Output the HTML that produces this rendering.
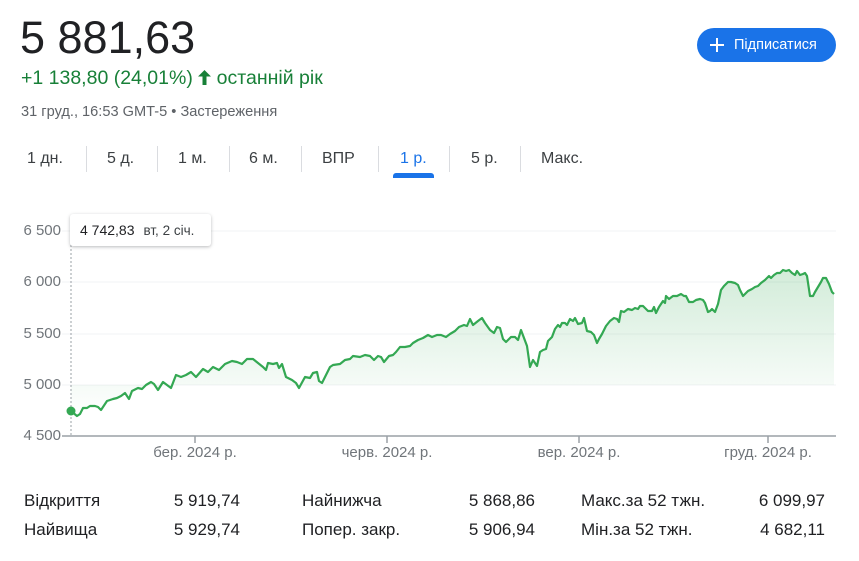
<!DOCTYPE html>
<html><head><meta charset="utf-8"><style>
body{margin:0;width:859px;height:561px;background:#fff;font-family:"Liberation Sans",Arial,sans-serif;position:relative;overflow:hidden;color:#202124}
.a{position:absolute;white-space:nowrap}
.tab{position:absolute;top:150px;font-size:16px;color:#3c4043}
.sep{position:absolute;top:146px;width:1px;height:26px;background:#dadce0}
.yl{position:absolute;right:798px;font-size:15px;color:#70757a}
.xl{position:absolute;top:444px;font-size:15px;color:#70757a;transform:translateX(-50%)}
.st{position:absolute;font-size:17px;color:#202124}
.v{text-align:right}
</style></head><body>
<div class="a" style="left:20px;top:12px;font-size:45px;line-height:52px;color:#202124">5 881,63</div>
<div class="a" style="left:21px;top:67px;font-size:19.5px;color:#188038">+1 138,80 (24,01%) <svg width="13" height="15" viewBox="0 0 13 15" style="vertical-align:-1px"><path d="M6.5 0L0 6.5h4.5V15h4V6.5H13z" fill="#188038"/></svg> останній рік</div>
<div class="a" style="left:21px;top:104px;font-size:14.6px;color:#5f6368">31 груд., 16:53 GMT-5 • Застереження</div>
<div class="a" style="left:697px;top:28px;width:139px;height:34px;border-radius:17px;background:#1a73e8;color:#fff;font-size:14.5px;line-height:34px;">
<svg width="14" height="14" viewBox="0 0 14 14" style="position:absolute;left:13px;top:10px"><path d="M7 0v14M0 7h14" stroke="#fff" stroke-width="2"/></svg>
<span style="position:absolute;left:37px">Підписатися</span></div>
<div class="tab" style="left:27px">1 дн.</div>
<div class="sep" style="left:86px"></div>
<div class="tab" style="left:107px">5 д.</div>
<div class="sep" style="left:157px"></div>
<div class="tab" style="left:178px">1 м.</div>
<div class="sep" style="left:229px"></div>
<div class="tab" style="left:249px">6 м.</div>
<div class="sep" style="left:301px"></div>
<div class="tab" style="left:322px">ВПР</div>
<div class="sep" style="left:378px"></div>
<div class="tab" style="left:400px;color:#1a73e8">1 р.</div>
<div class="a" style="left:393px;top:173px;width:41px;height:5px;background:#1a73e8;border-radius:3px 3px 0 0"></div>
<div class="sep" style="left:449px"></div>
<div class="tab" style="left:471px">5 р.</div>
<div class="sep" style="left:520px"></div>
<div class="tab" style="left:541px">Макс.</div>

<div class="yl" style="top:222px">6 500</div>
<div class="yl" style="top:273px">6 000</div>
<div class="yl" style="top:325px">5 500</div>
<div class="yl" style="top:376px">5 000</div>
<div class="yl" style="top:427px">4 500</div>

<svg class="a" style="left:0;top:0" width="859" height="470">
<defs><linearGradient id="g" x1="0" y1="0" x2="0" y2="1"><stop offset="0" stop-color="#34a853" stop-opacity=".22"/><stop offset="1" stop-color="#34a853" stop-opacity="0"/></linearGradient></defs>
<g stroke="#f1f3f4" stroke-width="1"><line x1="62" y1="231" x2="836" y2="231"/><line x1="62" y1="282" x2="836" y2="282"/><line x1="62" y1="334" x2="836" y2="334"/><line x1="62" y1="385" x2="836" y2="385"/></g>
<polygon fill="url(#g)" points="71,411 77,416 80,414 83,408 87,408 90,406 95,406 98,407 101,410 107,401 113,399 117,398 121,396 125,393 129,399 132,391 138,388 142,389 146,385 151,382 154,384 158,390 163,382 167,385 171,388 176,375 181,377 186,375 191,372 196,377 203,369 208,372 213,367 219,370 225,364 232,361 237,362 242,364 247,359 253,359 258,363 263,367 266,370 268,363 273,364 277,363 279,368 282,364 286,377 292,380 296,383 299,388 305,377 310,378 313,373 317,372 319,381 322,383 330,367 333,365 340,364 345,360 350,359 353,356 360,357 365,355 370,356 374,360 378,356 381,357 384,362 389,356 393,355 396,352 400,347 405,347 410,346 413,343 418,340 423,338 428,335 432,337 437,335 441,335 446,337 450,334 455,331 459,327 464,325 467,326 470,319 473,325 478,321 482,318 485,323 490,330 494,333 497,327 500,328 503,339 506,342 511,337 515,337 518,340 521,330 524,338 527,346 530,367 533,360 535,363 537,366 540,352 543,350 546,349 548,341 552,337 555,329 558,325 560,327 562,323 565,323 567,325 570,319 573,321 575,318 578,324 582,323 584,318 587,331 591,332 594,335 597,343 599,339 602,334 606,326 610,321 614,318 617,319 619,322 621,311 624,312 628,309 632,310 635,308 638,309 640,306 643,306 645,308 648,311 652,311 654,307 656,313 659,307 663,301 665,303 666,296 669,299 673,296 677,296 681,294 684,296 686,296 689,302 693,302 696,300 700,299 703,300 705,303 708,312 710,311 712,309 715,312 718,304 721,290 724,286 728,282 731,282 735,283 738,285 740,290 743,296 745,294 748,291 752,289 755,287 758,286 761,283 765,280 769,276 771,278 774,275 777,273 780,273 783,270 786,271 789,270 792,273 795,275 797,271 800,275 803,274 805,273 807,276 810,296 813,296 815,292 818,287 821,282 823,278 826,278 829,284 832,292 834,294 834,385 71,385"/>
<line x1="71" y1="245" x2="71" y2="436" stroke="#9aa0a6" stroke-width="1" stroke-dasharray="2,2"/>
<polyline fill="none" stroke="#34a853" stroke-width="2.2" stroke-linejoin="round" points="71,411 77,416 80,414 83,408 87,408 90,406 95,406 98,407 101,410 107,401 113,399 117,398 121,396 125,393 129,399 132,391 138,388 142,389 146,385 151,382 154,384 158,390 163,382 167,385 171,388 176,375 181,377 186,375 191,372 196,377 203,369 208,372 213,367 219,370 225,364 232,361 237,362 242,364 247,359 253,359 258,363 263,367 266,370 268,363 273,364 277,363 279,368 282,364 286,377 292,380 296,383 299,388 305,377 310,378 313,373 317,372 319,381 322,383 330,367 333,365 340,364 345,360 350,359 353,356 360,357 365,355 370,356 374,360 378,356 381,357 384,362 389,356 393,355 396,352 400,347 405,347 410,346 413,343 418,340 423,338 428,335 432,337 437,335 441,335 446,337 450,334 455,331 459,327 464,325 467,326 470,319 473,325 478,321 482,318 485,323 490,330 494,333 497,327 500,328 503,339 506,342 511,337 515,337 518,340 521,330 524,338 527,346 530,367 533,360 535,363 537,366 540,352 543,350 546,349 548,341 552,337 555,329 558,325 560,327 562,323 565,323 567,325 570,319 573,321 575,318 578,324 582,323 584,318 587,331 591,332 594,335 597,343 599,339 602,334 606,326 610,321 614,318 617,319 619,322 621,311 624,312 628,309 632,310 635,308 638,309 640,306 643,306 645,308 648,311 652,311 654,307 656,313 659,307 663,301 665,303 666,296 669,299 673,296 677,296 681,294 684,296 686,296 689,302 693,302 696,300 700,299 703,300 705,303 708,312 710,311 712,309 715,312 718,304 721,290 724,286 728,282 731,282 735,283 738,285 740,290 743,296 745,294 748,291 752,289 755,287 758,286 761,283 765,280 769,276 771,278 774,275 777,273 780,273 783,270 786,271 789,270 792,273 795,275 797,271 800,275 803,274 805,273 807,276 810,296 813,296 815,292 818,287 821,282 823,278 826,278 829,284 832,292 834,294"/>
<circle cx="71" cy="411" r="4.5" fill="#34a853"/>
<line x1="62" y1="436" x2="836" y2="436" stroke="#9aa0a6" stroke-width="1.5"/>
<g stroke="#9aa0a6" stroke-width="1.5"><line x1="195" y1="436" x2="195" y2="443"/><line x1="387" y1="436" x2="387" y2="443"/><line x1="579" y1="436" x2="579" y2="443"/><line x1="768" y1="436" x2="768" y2="443"/></g>
</svg>
<div class="a" style="left:70px;top:214px;width:141px;height:32px;background:#fff;border-radius:3px;box-shadow:0 1px 3px rgba(60,64,67,.35);font-size:14px;line-height:32px"><span style="margin-left:10px;color:#202124">4 742,83</span><span style="margin-left:9px;color:#3c4043;font-size:13.5px">вт, 2 січ.</span></div>

<div class="xl" style="left:195px">бер. 2024 р.</div>
<div class="xl" style="left:387px">черв. 2024 р.</div>
<div class="xl" style="left:579px">вер. 2024 р.</div>
<div class="xl" style="left:768px">груд. 2024 р.</div>

<div class="st" style="left:24px;top:491px">Відкриття</div>
<div class="st v" style="left:140px;width:100px;top:491px">5 919,74</div>
<div class="st" style="left:302px;top:491px">Найнижча</div>
<div class="st v" style="left:435px;width:100px;top:491px">5 868,86</div>
<div class="st" style="left:581px;top:491px">Макс.за 52 тжн.</div>
<div class="st v" style="left:725px;width:100px;top:491px">6 099,97</div>
<div class="st" style="left:24px;top:520px">Найвища</div>
<div class="st v" style="left:140px;width:100px;top:520px">5 929,74</div>
<div class="st" style="left:302px;top:520px">Попер. закр.</div>
<div class="st v" style="left:435px;width:100px;top:520px">5 906,94</div>
<div class="st" style="left:581px;top:520px">Мін.за 52 тжн.</div>
<div class="st v" style="left:725px;width:100px;top:520px">4 682,11</div>
</body></html>
